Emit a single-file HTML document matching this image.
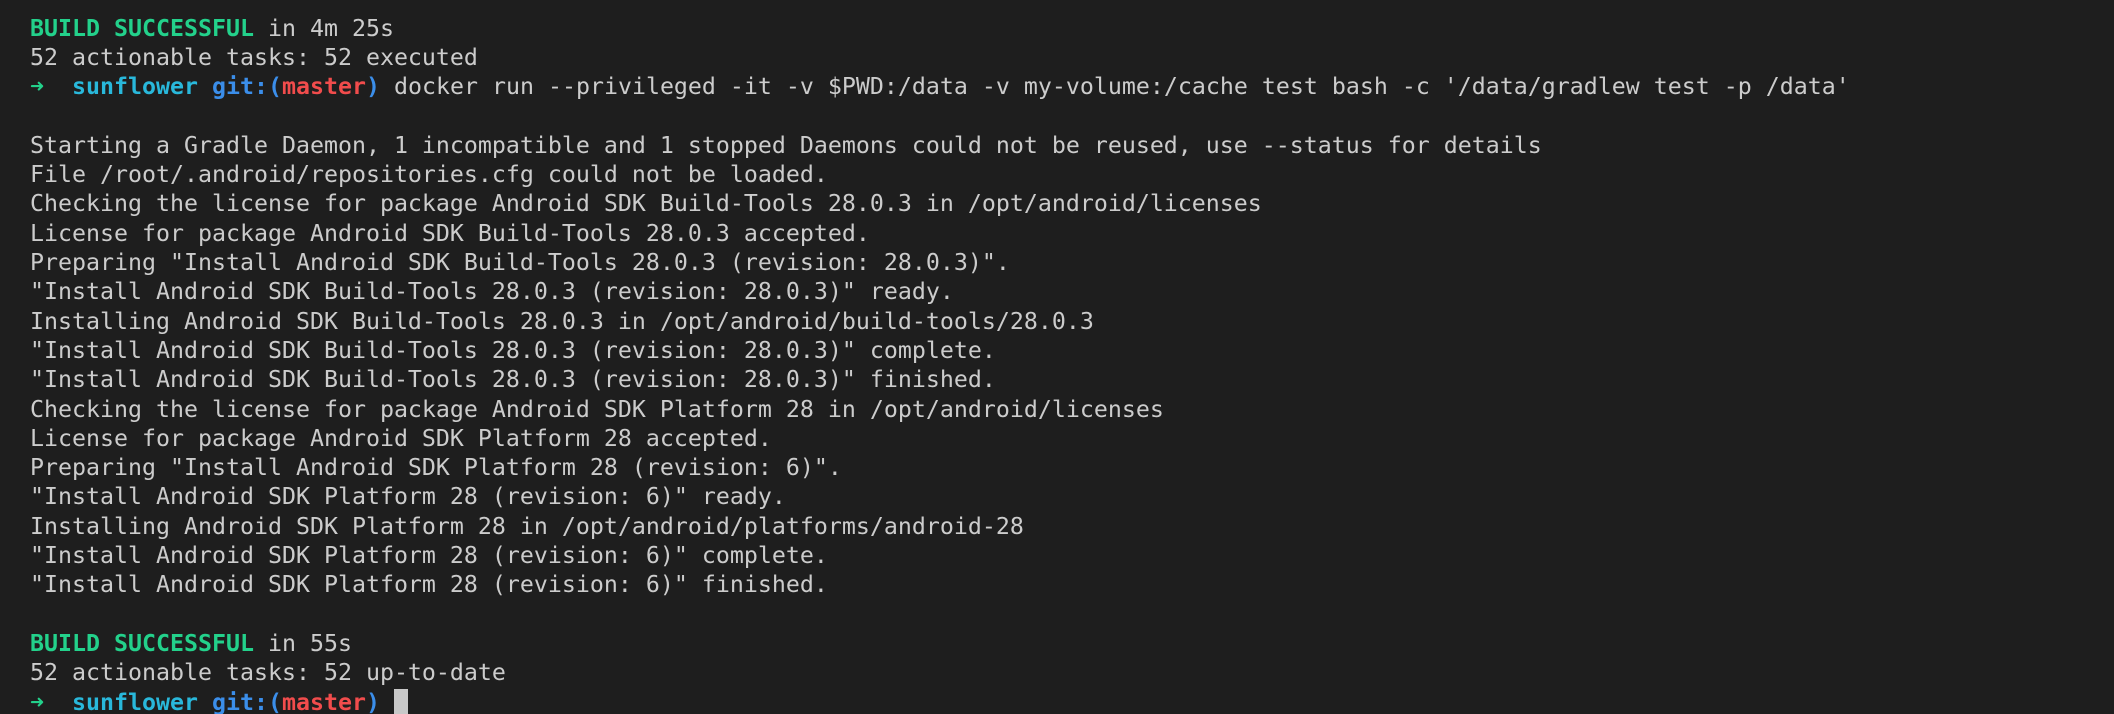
<!DOCTYPE html>
<html><head><meta charset="utf-8"><style>
html,body{margin:0;padding:0;background:#1e1e1e;width:2114px;height:714px;overflow:hidden}
pre{margin:0;padding:13.7px 0 0 30px;font-family:"DejaVu Sans Mono","Liberation Mono",monospace;font-size:23.25px;line-height:29.3px;color:#cccccc;white-space:pre}
.g{color:#23d18b;font-weight:bold}
.c{color:#29b8db;font-weight:bold}
.b{color:#3b8eea;font-weight:bold}
.r{color:#f14c4c;font-weight:bold}
.cur{display:inline-block;width:14px;height:27px;background:#c8c8c8;vertical-align:-6px}
</style></head><body><pre><span class="g">BUILD SUCCESSFUL</span> in 4m 25s
52 actionable tasks: 52 executed
<span class="g">➜</span>  <span class="c">sunflower</span> <span class="b">git:(</span><span class="r">master</span><span class="b">)</span> docker run --privileged -it -v $PWD:/data -v my-volume:/cache test bash -c '/data/gradlew test -p /data'

Starting a Gradle Daemon, 1 incompatible and 1 stopped Daemons could not be reused, use --status for details
File /root/.android/repositories.cfg could not be loaded.
Checking the license for package Android SDK Build-Tools 28.0.3 in /opt/android/licenses
License for package Android SDK Build-Tools 28.0.3 accepted.
Preparing "Install Android SDK Build-Tools 28.0.3 (revision: 28.0.3)".
"Install Android SDK Build-Tools 28.0.3 (revision: 28.0.3)" ready.
Installing Android SDK Build-Tools 28.0.3 in /opt/android/build-tools/28.0.3
"Install Android SDK Build-Tools 28.0.3 (revision: 28.0.3)" complete.
"Install Android SDK Build-Tools 28.0.3 (revision: 28.0.3)" finished.
Checking the license for package Android SDK Platform 28 in /opt/android/licenses
License for package Android SDK Platform 28 accepted.
Preparing "Install Android SDK Platform 28 (revision: 6)".
"Install Android SDK Platform 28 (revision: 6)" ready.
Installing Android SDK Platform 28 in /opt/android/platforms/android-28
"Install Android SDK Platform 28 (revision: 6)" complete.
"Install Android SDK Platform 28 (revision: 6)" finished.

<span class="g">BUILD SUCCESSFUL</span> in 55s
52 actionable tasks: 52 up-to-date
<span class="g">➜</span>  <span class="c">sunflower</span> <span class="b">git:(</span><span class="r">master</span><span class="b">)</span> <span class="cur"></span></pre></body></html>
